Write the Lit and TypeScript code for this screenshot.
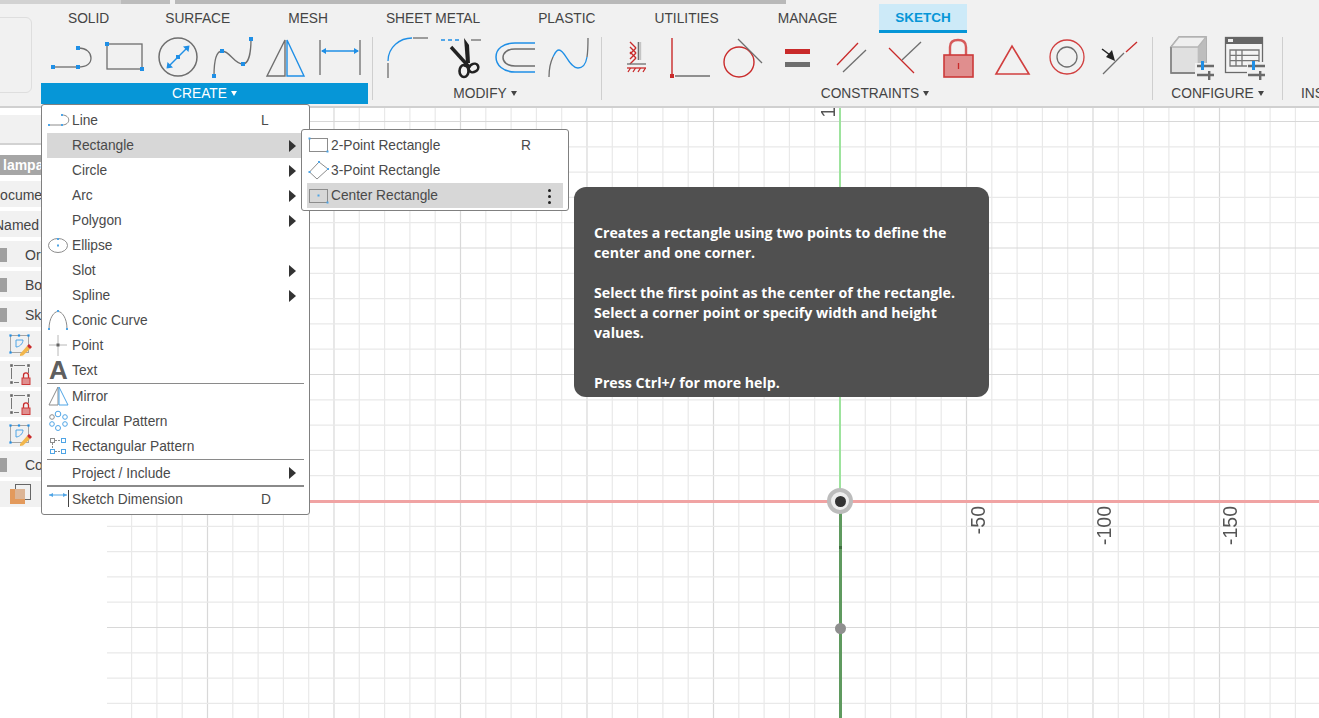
import { LitElement, html, css, svg, TemplateResult } from "lit";
import { customElement } from "lit/decorators.js";

const B = "#1f8fe6";
const G = "#6e6e6e";
const R = "#c92a2a";
const LG = "#8c8c8c";
const LB = "#4fa5e6";

const sq = (x: number, y: number, s = 4, c = B) =>
  svg`<rect x=${x - s / 2} y=${y - s / 2} width=${s} height=${s} fill=${c}></rect>`;
const cell = (inner: unknown) =>
  html`<svg class="tool" width="54" height="50" viewBox="0 0 54 50" fill="none" stroke-width="1.3">${inner}</svg>`;
const mini = (inner: unknown) =>
  html`<svg class="mi" width="25" height="25" viewBox="0 0 25 25" fill="none" stroke-width="1">${inner}</svg>`;

const createIcons = [
  svg`<path d="M9 34H34" stroke=${G}/><path d="M34 15C43 15 47 20 47 25C47 30 43 34 34 34" stroke=${G}/>${sq(9, 34)}${sq(34, 34)}${sq(34, 15)}`,
  svg`<rect x="9" y="11" width="35" height="25" stroke=${G}/>${sq(9, 11)}${sq(44, 36)}`,
  svg`<circle cx="26" cy="24" r="19" stroke=${G} stroke-width="1.5"/><path d="M16 34L36 14" stroke=${B} stroke-width="1.5"/><path d="M14.5 35.5L15.5 29L21 34.5ZM37.5 12.5L36.5 19L31 13.5Z" fill=${B}/>${sq(26, 24)}`,
  svg`<path d="M8 43C8 30 10 18 16 18" stroke=${G}/><path d="M16 18C24 18 28 31 37 31" stroke=${G}/><path d="M37 31C43 31 45 18 45 6" stroke=${G}/>${sq(8, 43)}${sq(16, 18)}${sq(37, 31)}${sq(45, 6)}`,
  svg`<path d="M7 43L25 7V43Z" stroke=${G} stroke-width="1.4"/><path d="M27 7V43H44Z" stroke=${B} stroke-width="1.4"/>`,
  svg`<path d="M6 7V42M46 7V42" stroke=${G}/><path d="M8 18H44" stroke=${B}/><path d="M7 18L12 15V21ZM45 18L40 15V21Z" fill=${B}/>`,
];

const modifyIcons = [
  svg`<path d="M8 30V45" stroke=${G}/><path d="M8 28C8 14 20 5 32 5" stroke=${B}/><path d="M33 5H48" stroke=${G}/>`,
  svg`<path d="M7 7H28" stroke=${B} stroke-dasharray="4 3"/><path d="M37 7H47" stroke=${G}/>
    <path d="M30 5L35 12L36 30L32 30Z" fill="#222"/><path d="M17 14L36 35" stroke="#222" stroke-width="3.4"/>
    <path d="M33 28L31 34" stroke="#222" stroke-width="3"/>
    <ellipse cx="30" cy="38" rx="4.5" ry="6" stroke="#222" stroke-width="2.6"/><ellipse cx="39.5" cy="35" rx="5" ry="4" transform="rotate(-30 39.5 35)" stroke="#222" stroke-width="2.6"/>`,
  svg`<path d="M47 10H27C15 10 8 16 8 24C8 32 15 39 27 39H47" stroke=${B} stroke-width="1.5"/><path d="M47 16H27C19 16 15 20 15 24.500C15 29 19 33 27 33H47" stroke=${G} stroke-width="1.5"/>`,
  svg`<path d="M7 44C7 36 9 28 11 24" stroke=${G}/><path d="M11 24C13 20 14 17 17 17C23 17 27 35 36 35C42 35 44 30 45 24" stroke=${B}/><path d="M45 24C46 18 46 12 46 5" stroke=${G}/>`,
];

const hatch = [0, 1, 2].map((i) => svg`<path d="M20 ${9 + i * 5}L26 ${15 + i * 5}M20 ${21 + i * 5}L26 ${15 + i * 5}" stroke=${R} stroke-width="1.4"/>`);
const constraintIcons = [
  svg`${hatch}<path d="M28.500 9V27" stroke=${G} stroke-width="1.6"/><path d="M30.500 9V27" stroke="#c4c4c4" stroke-width="1.4"/><path d="M17 31H36" stroke=${G} stroke-width="1.3"/><path d="M17 35H36" stroke=${R}/><path d="M18 39L20.500 35M23 39L25.500 35M28 39L30.500 35M33 39L35.500 35" stroke=${R}/>`,
  svg`<path d="M8 5V41" stroke=${R} stroke-width="1.4"/>${sq(8, 43, 4, R)}<path d="M11 43H46" stroke=${G}/>`,
  svg`<circle cx="21" cy="29" r="15" stroke=${R} stroke-width="1.4"/><path d="M20 6L44 30" stroke=${G}/>`,
  svg`<rect x="13" y="16" width="25" height="5" fill=${R}/><rect x="13" y="29" width="25" height="5" fill=${G}/>`,
  svg`<path d="M11 32L32 10" stroke=${R}/><path d="M17 39L40 17" stroke=${G}/>`,
  svg`<path d="M9 15L34 40" stroke=${R}/><path d="M22 27L41 9" stroke=${G}/>`,
  svg`<path d="M16 22V14C16 9 19 7 24 7C29 7 32 9 32 14V22" stroke="#d65a5a" stroke-width="2.4"/><rect x="10" y="22" width="29" height="22" fill="#e08e8e" stroke="#cc3a3a" stroke-width="1.6"/><path d="M24.500 30V36" stroke=${R}/>`,
  svg`<path d="M8 41L24 13L41 41Z" stroke="#d13f3f" stroke-width="1.6"/>`,
  svg`<circle cx="25" cy="24" r="17" stroke="#d13f3f" stroke-width="1.3"/><circle cx="25" cy="24" r="10" stroke=${G} stroke-width="1.3"/>`,
  svg`<path d="M7 41L28 20" stroke=${G}/><path d="M30 19L41 9" stroke=${R}/><path d="M6 16L14 22" stroke="#222" stroke-width="1.5"/><path d="M19 28L10 24L16 17Z" fill="#222"/>`,
];

const sliders = (x: number, y: number) => svg`
  <path d="M${x} ${y}H${x + 17}M${x} ${y + 9}H${x + 17}" stroke="#6a6a6a" stroke-width="2.4"/>
  <rect x=${x + 4} y=${y - 5} width="3" height="9" fill=${B}/><rect x=${x + 11} y=${y + 5} width="2.400" height="9" fill="#6a6a6a"/>`;

const configIcons = [
  svg`<path d="M6 14L14 4H41V40H6Z" fill="#e0e0e0" stroke="#8d8d8d"/><path d="M6 14H33V40" stroke="#cfcfcf"/><path d="M33 14L41 4V40H33Z" fill="#bdbdbd"/><path d="M6 14L14 4H41L33 14Z" fill="#efefef" stroke="#b5b5b5"/><path d="M6 14V40H41" stroke="#7e7e7e"/><rect x="30" y="30" width="20" height="22" fill="#f1f1f1"/>${sliders(32, 33)}`,
  svg`<rect x="6.500" y="4.500" width="37" height="35" fill="#f4f4f4" stroke="#6a6a6a"/><rect x="6" y="4" width="38" height="7" fill="#666"/><rect x="9" y="6" width="5" height="3" fill="#eee"/><path d="M11 17H40V33H11ZM11 22.300H40M11 27.600H40M17 17V33M23 17V33" stroke="#777"/><rect x="28" y="29" width="22" height="22" fill="#f1f1f1"/>${sliders(29, 33)}`,
];

const menuIcon: Record<string, unknown> = {
  Line: svg`<path d="M2 17H15M15 7C24 7 24 17 15 17" stroke=${LG}/>${sq(2, 17, 2, LB)}${sq(15, 17, 2, LB)}${sq(15, 7, 2, LB)}`,
  Ellipse: svg`<ellipse cx="11" cy="12.500" rx="9.500" ry="7" stroke=${LG}/>${sq(11, 6, 2, LB)}${sq(11, 12.5, 2, LB)}`,
  "Conic Curve": svg`<path d="M2 21C2 10 7 3.500 11 3.500C15 3.500 20 10 20 21" stroke=${LG}/>${sq(2, 21, 2, LB)}${sq(20, 21, 2, LB)}${sq(11, 3, 2, LB)}`,
  Point: svg`<path d="M2 12H20M11 2V23" stroke="#b8b8b8"/><rect x="9.500" y="10.500" width="3" height="3" fill="#666"/>`,
  Mirror: svg`<path d="M2 21L11 3V21Z" stroke=${LG}/><path d="M12 3V21H21Z" stroke=${LB}/>`,
  "Circular Pattern": svg`<g stroke=${LB}><circle cx="11" cy="5" r="2.800"/><circle cx="18" cy="8" r="2.300"/><circle cx="18" cy="15" r="2.300"/><circle cx="11" cy="19" r="2.500" /><circle cx="5" cy="15" r="2.300"/></g><circle cx="5" cy="8" r="2.300" stroke=${LG}/>`,
  "Rectangular Pattern": svg`<rect x="3.500" y="4.500" width="4" height="4" stroke=${LG}/><rect x="14.500" y="4.500" width="4" height="4" stroke=${LB}/><rect x="3.500" y="15.500" width="4" height="4" stroke=${LB}/><rect x="14.500" y="15.500" width="4" height="4" stroke=${LB}/><path d="M8 6.500H14M8 17.500H14M5.500 9V15" stroke=${LG} stroke-dasharray="2 1"/>`,
  "Sketch Dimension": svg`<path d="M2 8H20" stroke=${LB}/><path d="M2 8L6 6V10ZM20 8L16 6V10Z" fill=${LB}/><path d="M21.500 3V20" stroke="#444"/>`,
};

const subIcon: unknown[] = [
  svg`<rect x="2.500" y="5.500" width="18" height="13" stroke=${LG}/>${sq(20.5, 18.5, 2, LB)}${sq(2.5, 5.5, 2, LB)}`,
  svg`<path d="M2.500 14L12 4L21 11L10 21Z" stroke=${LG}/>${sq(2.5, 14, 2, LB)}${sq(12, 4, 2, LB)}${sq(21, 11, 2, LB)}`,
  svg`<rect x="2.500" y="6.500" width="18" height="13" stroke=${LG}/>${sq(11.5, 12.5, 2, LB)}${sq(20.5, 19.5, 2, LB)}`,
];

type MenuRow = { label: string; key?: string; arrow?: boolean; active?: boolean; sep?: number; text?: boolean; low?: boolean };
const menu: MenuRow[] = [
  { label: "Line", key: "L" },
  { label: "Rectangle", arrow: true, active: true },
  { label: "Circle", arrow: true },
  { label: "Arc", arrow: true },
  { label: "Polygon", arrow: true },
  { label: "Ellipse" },
  { label: "Slot", arrow: true },
  { label: "Spline", arrow: true },
  { label: "Conic Curve" },
  { label: "Point" },
  { label: "Text", text: true, sep: 1 },
  { label: "Mirror" },
  { label: "Circular Pattern" },
  { label: "Rectangular Pattern", sep: 1 },
  { label: "Project / Include", arrow: true, sep: 2, low: true },
  { label: "Sketch Dimension", key: "D" },
];

const tabs = ["SOLID", "SURFACE", "MESH", "SHEET METAL", "PLASTIC", "UTILITIES", "MANAGE", "SKETCH"];

const sketchRow = svg`<rect x="2.500" y="4.500" width="18" height="17" stroke="#a5a5a5"/><path d="M8 9H15M8 9V16M8 16C11 16 15 13 15 9" stroke=${LB}/>${[[2.5, 4.5], [20.5, 4.5], [2.5, 21.5], [11, 4.5]].map(([x, y]) => sq(x, y, 2.2))}<path d="M12 23L19 15L22 18L15 24.500L12 25Z" fill="#f2b64c"/><path d="M19 15L21 13L24 16L22 18Z" fill=${R}/>`;
const lockRow = svg`<path d="M6 4.500H17M3.500 7V18M6 21.500H11M20.500 7V12" stroke="#777"/>${[[3.5, 4.5], [20.5, 4.5], [3.5, 21.5]].map(([x, y]) => sq(x, y, 2.6, "#666"))}<path d="M15.500 17V14.500C15.500 11 20.500 11 20.500 14.500V17" stroke=${R} stroke-width="1.3"/><rect x="14" y="17" width="8" height="6.500" fill="#e08e8e" stroke="#cc3a3a"/>`;
const orangeRow = svg`<rect x="7.500" y="3.500" width="15" height="15" stroke="#666"/><rect x="2" y="8" width="15" height="15" fill="#e39a5c"/><rect x="7" y="8" width="10" height="10" fill="#dcb596"/>`;

// Sketch grid: origin sits at (733, 393) inside the canvas, minor step 25.3, major every fifth.
const W = 1212;
const H = 610;
const step = 25.3;
const gridLines = (origin: number, max: number) => {
  const out: { p: number; major: boolean }[] = [];
  for (let k = Math.ceil(-origin / step); origin + k * step <= max; k++) {
    out.push({ p: origin + k * step, major: k % 5 === 0 });
  }
  return out;
};
const grid = svg`
  ${gridLines(733, W).map((l) => svg`<line x1=${l.p} x2=${l.p} y1="0" y2=${H} stroke=${l.major ? "#d8d8d8" : "#e9e9e9"} stroke-width="1.2"></line>`)}
  ${gridLines(393, H).map((l) => svg`<line y1=${l.p} y2=${l.p} x1="0" x2=${W} stroke=${l.major ? "#d8d8d8" : "#e9e9e9"} stroke-width="1.2"></line>`)}
`;

@customElement("app-root")
export class AppRoot extends LitElement {
  static styles = css`
    :host {
      display: block;
      width: 1319px;
      height: 718px;
      overflow: hidden;
      position: relative;
      background: #fff;
      font-family: "Liberation Sans", Arial, sans-serif;
      color: #444;
    }
    svg { display: block; flex: none; }

    .strip { display: flex; height: 4px; background: #f1f1f1; }
    .s1 { width: 121px; background: #d2d2d2; }
    .s2 { width: 49px; background: #bcbcbc; }
    .s3 { width: 5px; background: #f1f1f1; }
    .s4 { width: 611px; background: #b9b9b9; }

    .toolbar {
      display: flex;
      height: 102px;
      background: #f1f1f1;
      border-bottom: 2px solid #d0d0d0;
      box-sizing: content-box;
      overflow: hidden;
    }
    .side { width: 41px; flex: none; padding-top: 13px; }
    .sidebox {
      width: 42px;
      height: 76px;
      margin-left: -10px;
      border: 1px solid #dedede;
      border-radius: 6px;
      box-sizing: border-box;
    }
    .main { flex: 1; min-width: 0; }
    .tabs { display: flex; gap: 26px; height: 29px; padding-left: 11px; }
    .tab {
      padding: 0 16px;
      font-size: 13.75px;
      line-height: 29px;
      color: #444;
      white-space: nowrap;
    }
    .tab:first-child { margin-right: -2px; }
    .tab:nth-child(6), .tab:nth-child(7) { margin-left: 1px; }
    .tab.on {
      background: #cdeaf8;
      color: #0696d7;
      font-weight: 700;
      font-size: 13.5px;
      line-height: 28px;
      height: 26px;
      border-bottom: 3px solid #0696d7;
    }
    .panels { display: flex; height: 73px; }
    .group { display: flex; flex-direction: column; flex: none; box-sizing: border-box; }
    .tools { display: flex; height: 50px; }
    .label {
      height: 21px;
      display: flex;
      align-items: center;
      justify-content: center;
      font-size: 13.75px;
      color: #444;
      white-space: nowrap;
    }
    .label::after {
      content: "";
      margin-left: 4px;
      border-left: 3.5px solid transparent;
      border-right: 3.5px solid transparent;
      border-top: 5px solid #444;
    }
    .label.plain::after { display: none; }
    .label.left { justify-content: flex-start; }
    .create .label { background: #0696d7; color: #fff; }
    .create .label::after { border-top-color: #fff; }
    .create { width: 327px; margin-right: 4px; }
    .create .tools { padding-left: 3px; }
    .modify { width: 228px; }
    .modify .tools { padding-left: 7px; }
    .modify .label, .cons .label { padding-right: 4px; }
    .cons { width: 550px; }
    .cons .tools { padding-left: 8px; }
    .conf { width: 129px; }
    .conf .tools { padding-left: 12px; }
    .ins { width: 36px; padding-left: 18px; }
    .ins .tools { width: 20px; }
    .vsep { width: 1px; height: 63px; margin-top: 4px; background: #cfcfcf; flex: none; }

    .body { display: flex; height: 610px; }
    .tree { width: 107px; flex: none; background: #fff; overflow: hidden; padding-top: 7px; }
    .field { height: 28px; background: #f1f1f1; border-bottom: 2px solid #d2d2d2; margin-bottom: 10px; }
    .title {
      height: 20px;
      background: #a6a6a6;
      color: #fff;
      font-weight: 700;
      font-size: 14px;
      line-height: 20px;
      padding-left: 3px;
      margin-bottom: 6px;
    }
    .node {
      display: flex;
      align-items: center;
      height: 26px;
      box-sizing: border-box;
      padding-top: 2px;
      margin-bottom: 4px;
      background: #f1f1f1;
      font-size: 14px;
      color: #444;
      white-space: nowrap;
    }
    .node.pic { padding-top: 0; }
    .cut1 { margin-left: -10px; }
    .cut2 { margin-left: -6px; }
    .chip { width: 7px; height: 14px; background: #a0a0a0; margin-right: 18px; flex: none; }
    .ico { margin-left: 8px; }

    .canvas { position: relative; flex: 1; overflow: hidden; background: #fff; }
    .grid { position: absolute; left: 0; top: 0; }
    .ax { position: absolute; }
    .xaxis { left: 0; right: 0; top: 392px; height: 3px; background: #f0a3a3; }
    .yup { left: 732px; top: 0; width: 2px; height: 392px; background: #9de39d; }
    .ydown { left: 732px; top: 395px; width: 2.5px; bottom: 0; background: #5f9a5f; }
    .origin {
      left: 720px;
      top: 380px;
      width: 26px;
      height: 26px;
      box-sizing: border-box;
      border: 4.5px solid #bcbcbc;
      border-radius: 50%;
      background: #eee;
      display: flex;
      align-items: center;
      justify-content: center;
      filter: blur(0.7px);
    }
    .origin::after { content: ""; width: 11px; height: 11px; border-radius: 50%; background: #333; }
    .dot { left: 728px; top: 515px; width: 11px; height: 11px; border-radius: 50%; background: #8f8f8f; filter: blur(0.7px); }
    .tick { left: 732px; top: 438px; width: 2.5px; height: 3px; background: #3f6f3f; }
    .num {
      position: absolute;
      writing-mode: vertical-rl;
      transform: rotate(180deg);
      font-size: 19.5px;
      line-height: 18px;
      color: #555;
    }

    .menu {
      position: absolute;
      left: 41px;
      top: 104px;
      width: 269px;
      box-sizing: border-box;
      padding: 3px 5px 2px;
      background: #fff;
      border: 1px solid #808080;
      border-radius: 3px;
    }
    .row {
      display: flex;
      align-items: center;
      height: 25px;
      font-size: 13.75px;
      color: #4a4a4a;
      position: relative;
    }
    .row.on { background: #d7d7d7; }
    .row .mi { width: 25px; }
    .ph { width: 25px; flex: none; }
    .row .t { flex: 1; white-space: nowrap; }
    .row.low .t { padding-top: 2px; }
    .row .k { position: absolute; left: 214px; }
    .arrow {
      position: absolute;
      right: 8px;
      top: 6.500px;
      border-left: 7px solid #333;
      border-top: 6px solid transparent;
      border-bottom: 6px solid transparent;
    }
    .bigA { width: 25px; flex: none; font-size: 26px; font-weight: 700; color: #5f5f5f; line-height: 25px; padding-left: 2px; box-sizing: border-box; }
    .hr { background: #8a8a8a; }
    .hr1 { height: 1px; }
    .hr2 { height: 2px; }

    .sub {
      position: absolute;
      left: 301px;
      top: 129px;
      width: 268px;
      box-sizing: border-box;
      padding: 3px 5px 2px;
      background: #fff;
      border: 1px solid #808080;
      border-radius: 3px;
    }
    .sub .t { margin-left: -1px; }
    .sub .k { left: 214px; }
    .kebab { position: absolute; right: 12px; top: 6px; display: flex; flex-direction: column; gap: 3px; }
    .kebab i { display: block; width: 3px; height: 3px; border-radius: 50%; background: #222; }

    .tip {
      position: absolute;
      left: 574px;
      top: 187px;
      width: 415px;
      height: 210px;
      box-sizing: border-box;
      padding: 36px 20px 0;
      background: #505050;
      border-radius: 12px;
      color: #fff;
      font-family: "Open Sans", sans-serif;
      font-weight: 700;
      font-size: 14.2px;
      line-height: 20px;
    }
    .tip p { margin: 0; }
    .tip p + p { margin-top: 20px; }
    .tip p.last { margin-top: 30px; }
  `;

  private row(r: MenuRow): TemplateResult {
    const ic = menuIcon[r.label];
    return html`
      <div class="row ${r.active ? "on" : ""} ${r.low ? "low" : ""}">
        ${r.text ? html`<span class="bigA">A</span>` : ic ? mini(ic) : html`<span class="ph"></span>`}
        <span class="t">${r.label}</span>
        ${r.key ? html`<span class="k">${r.key}</span>` : ""}
        ${r.arrow ? html`<span class="arrow"></span>` : ""}
      </div>
      ${r.sep ? html`<div class="hr hr${r.sep}"></div>` : ""}
    `;
  }

  render() {
    const pic = (inner: unknown) =>
      html`<div class="node pic"><svg class="ico" width="26" height="26" viewBox="0 0 26 26" fill="none">${inner}</svg></div>`;
    return html`
      <div class="strip"><div class="s1"></div><div class="s2"></div><div class="s3"></div><div class="s4"></div></div>
      <div class="toolbar">
        <div class="side"><div class="sidebox"></div></div>
        <div class="main">
          <div class="tabs">
            ${tabs.map((t) => html`<div class="tab ${t === "SKETCH" ? "on" : ""}">${t}</div>`)}
          </div>
          <div class="panels">
            <div class="group create">
              <div class="tools">${createIcons.map(cell)}</div>
              <div class="label">CREATE</div>
            </div>
            <div class="vsep"></div>
            <div class="group modify">
              <div class="tools">${modifyIcons.map(cell)}</div>
              <div class="label">MODIFY</div>
            </div>
            <div class="vsep"></div>
            <div class="group cons">
              <div class="tools">${constraintIcons.map(cell)}</div>
              <div class="label">CONSTRAINTS</div>
            </div>
            <div class="vsep"></div>
            <div class="group conf">
              <div class="tools">${configIcons.map(cell)}</div>
              <div class="label">CONFIGURE</div>
            </div>
            <div class="vsep"></div>
            <div class="group ins">
              <div class="tools"></div>
              <div class="label plain left">INSERT</div>
            </div>
          </div>
        </div>
      </div>
      <div class="body">
        <div class="tree">
          <div class="field"></div>
          <div class="title">lampada</div>
          <div class="node"><span class="cut1">Document Settings</span></div>
          <div class="node"><span class="cut2">Named Views</span></div>
          <div class="node"><i class="chip"></i>Origin</div>
          <div class="node"><i class="chip"></i>Bodies</div>
          <div class="node"><i class="chip"></i>Sketches</div>
          ${pic(sketchRow)}${pic(lockRow)}${pic(lockRow)}${pic(sketchRow)}
          <div class="node"><i class="chip"></i>Components</div>
          ${pic(orangeRow)}
        </div>
        <div class="canvas">
          <svg class="grid" width=${W} height=${H}>${grid}</svg>
          <div class="ax xaxis"></div>
          <div class="ax yup"></div>
          <div class="ax ydown"></div>
          <div class="ax tick"></div>
          <div class="ax dot"></div>
          <div class="ax origin"></div>
          <span class="num" style="left:712px;top:-23px">100</span>
          <span class="num" style="left:862px;top:398px">-50</span>
          <span class="num" style="left:988px;top:398px">-100</span>
          <span class="num" style="left:1114px;top:398px">-150</span>
        </div>
      </div>

      <div class="menu">${menu.map((r) => this.row(r))}</div>

      <div class="sub">
        <div class="row">${mini(subIcon[0])}<span class="t">2-Point Rectangle</span><span class="k">R</span></div>
        <div class="row">${mini(subIcon[1])}<span class="t">3-Point Rectangle</span></div>
        <div class="row on">${mini(subIcon[2])}<span class="t">Center Rectangle</span><span class="kebab"><i></i><i></i><i></i></span></div>
      </div>

      <div class="tip">
        <p>Creates a rectangle using two points to define the center and one corner.</p>
        <p>Select the first point as the center of the rectangle. Select a corner point or specify width and height values.</p>
        <p class="last">Press Ctrl+/ for more help.</p>
      </div>
    `;
  }
}
